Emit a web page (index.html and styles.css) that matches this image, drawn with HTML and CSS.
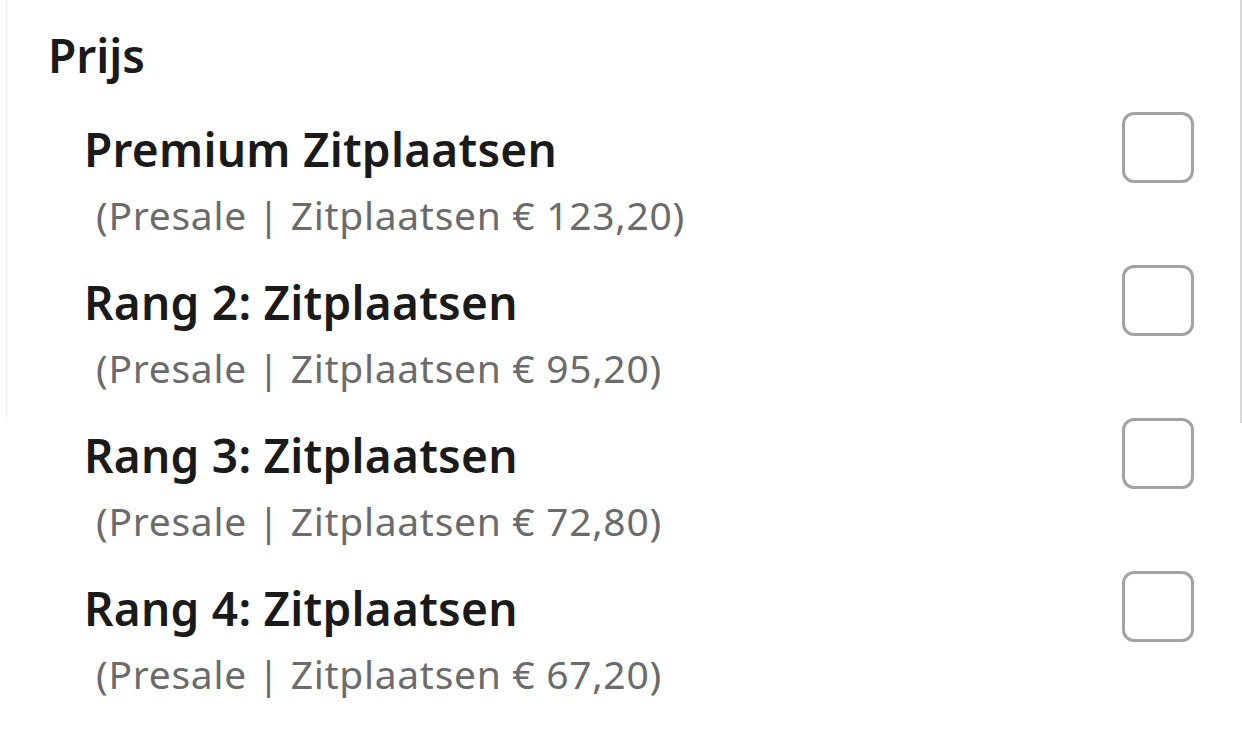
FILE: index.html
```html
<!DOCTYPE html>
<html lang="nl">
    <head>
        <meta charset="UTF-8" />
        <meta name="viewport" content="width=device-width, initial-scale=1.0" />
        <title>Prijs</title>
        <link rel="stylesheet" href="styles.css">
    </head>
    <body>
        <div class="filter">
            <h2 class="filter-title">Prijs</h2>
            <ul class="options">
                <li class="option">
                    <div class="option-info">
                        <span class="option-name">Premium Zitplaatsen</span>
                        <span class="option-price">(Presale | Zitplaatsen € 123,20)</span>
                    </div>
                    <span class="checkbox"></span>
                </li>
                <li class="option">
                    <div class="option-info">
                        <span class="option-name">Rang 2: Zitplaatsen</span>
                        <span class="option-price">(Presale | Zitplaatsen € 95,20)</span>
                    </div>
                    <span class="checkbox"></span>
                </li>
                <li class="option">
                    <div class="option-info">
                        <span class="option-name">Rang 3: Zitplaatsen</span>
                        <span class="option-price">(Presale | Zitplaatsen € 72,80)</span>
                    </div>
                    <span class="checkbox"></span>
                </li>
                <li class="option">
                    <div class="option-info">
                        <span class="option-name">Rang 4: Zitplaatsen</span>
                        <span class="option-price">(Presale | Zitplaatsen € 67,20)</span>
                    </div>
                    <span class="checkbox"></span>
                </li>
            </ul>
        </div>
    </body>
</html>
```

FILE: styles.css
```css
html {
    font-family: "Noto Sans", "Open Sans", Arial, sans-serif;
}

body {
    margin: 0;
    background:
        linear-gradient(#f0f0f0, #f0f0f0) 6px 0 / 1px 423px no-repeat,
        linear-gradient(#d8d8d8, #d8d8d8) 1240px 0 / 2px 423px no-repeat,
        #fff;
    min-height: 735px;
}

.filter {
    display: flex;
    flex-direction: column;
    padding: 27px 48px 0 48px;
}

.filter-title {
    margin: 0;
    font-size: 46px;
    line-height: 56px;
    font-weight: 600;
    color: #1a1a1a;
}

.options {
    list-style: none;
    margin: 29px 0 0;
    padding: 0 0 0 36px;
    display: flex;
    flex-direction: column;
    gap: 19px;
}

.option {
    display: flex;
    justify-content: space-between;
    align-items: flex-start;
}

.option-info {
    display: flex;
    flex-direction: column;
    padding-top: 9px;
}

.option-name {
    font-size: 46px;
    line-height: 56px;
    font-weight: 600;
    letter-spacing: 0.25px;
    color: #1a1a1a;
}

.option-price {
    margin-top: 6px;
    padding-left: 12px;
    font-size: 39px;
    line-height: 63px;
    letter-spacing: 0.7px;
    color: #6b6b6b;
}

.checkbox {
    width: 72px;
    height: 71px;
    box-sizing: border-box;
    border: 3px solid #a3a3a3;
    border-radius: 12px;
}
```
